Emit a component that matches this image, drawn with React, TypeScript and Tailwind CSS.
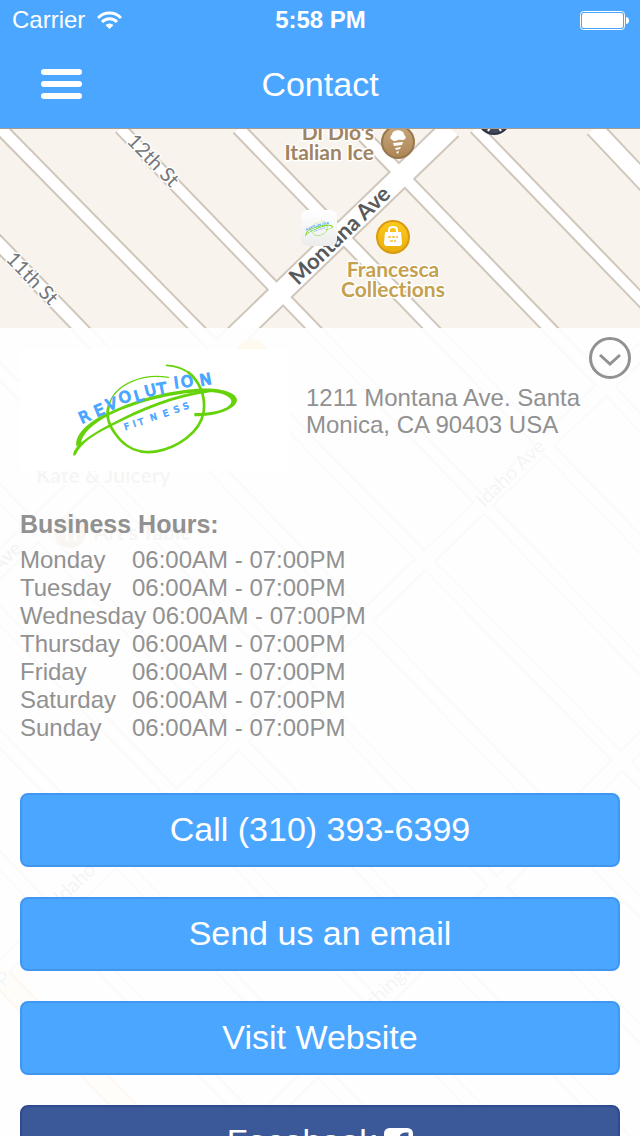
import { useState } from "react";
import clsx from "clsx";

type Action = {
  label: string;
  href: string;
  facebook?: boolean;
};

const HOURS = [
  { day: "Monday", time: "06:00AM - 07:00PM" },
  { day: "Tuesday", time: "06:00AM - 07:00PM" },
  { day: "Wednesday", time: "06:00AM - 07:00PM" },
  { day: "Thursday", time: "06:00AM - 07:00PM" },
  { day: "Friday", time: "06:00AM - 07:00PM" },
  { day: "Saturday", time: "06:00AM - 07:00PM" },
  { day: "Sunday", time: "06:00AM - 07:00PM" },
];

const ACTIONS: Action[] = [
  { label: "Call (310) 393-6399", href: "tel:+13103936399" },
  { label: "Send us an email", href: "mailto:" },
  { label: "Visit Website", href: "#website" },
  { label: "Facebook", href: "#facebook", facebook: true },
];

// numbered streets run down to the right, avenues down to the left
const STREETS = [
  { d: "M-590 128L410 1163", width: 15 },
  { d: "M-708 128L292 1163", width: 15 },
  { d: "M-471 128L529 1163", width: 15 },
  { d: "M-353 128L647 1163", width: 15 },
  { d: "M-235 128L765 1163", width: 15 },
  { d: "M-113 128L887 1163", width: 16 },
  { d: "M0 128L1000 1146", width: 15 },
  { d: "M120 128L1120 1163", width: 14 },
  { d: "M238 128L1238 1163", width: 15 },
  { d: "M356 128L1356 1163", width: 15 },
  { d: "M475 128L1475 1163", width: 14 },
  { d: "M594 128L1594 1188", width: 20 },
  { d: "M451 128L-49 611", width: 24 },
  { d: "M700 295L0 970", width: 17 },
  { d: "M720 662L220 1165", width: 17 },
];

function LogoMark({ className }: { className?: string }) {
  return (
    <svg viewBox="-120 -18 810 366" className={className} role="img" aria-label="Revolution Fitness">
      <g fill="none" stroke="#66d30a" strokeLinecap="round">
        <path d="M325 67C250 55 165 85 147 150" strokeWidth="4" />
        <path
          d="M147 150C135 185 150 215 165 235C195 280 240 298 290 289C350 278 420 235 431 170C438 120 415 75 385 52"
          strokeWidth="8"
        />
        <path d="M385 52C365 38 345 33 320 31" strokeWidth="5" />
      </g>
      <g fill="#66d30a">
        <path d="M50 274C40 240 90 195 145 173C240 125 370 96 460 101C500 104 532 118 531 136C528 160 480 184 403 184L403 174C470 175 515 158 514 138C512 122 480 112 445 111C370 109 240 135 145 182C100 205 60 240 64 270Z" />
        <path d="M40 302C38 280 70 250 145 210C250 154 340 118 450 104L450 112C340 128 250 165 148 217C100 241 62 266 47 300Z" />
      </g>
      <g fill="#4ba6ff" stroke="#4ba6ff" strokeWidth="4" className="font-['DejaVu_Sans',sans-serif]">
        <text
          x="65 110 145 182 228 259 294 344 366 422"
          y="206 186 167 147 142 126 119 100 98 92"
          rotate="-24 -22 -18 -18 -16 -14 -10 -8 -10 -10"
          fontSize="46"
        >
          REVOLUTION
        </text>
        <text x="196 222 238 274 312 344 372" y="226 216 212 198 186 175 165" rotate="-18" fontSize="27" strokeWidth="2">
          FITNESS
        </text>
      </g>
    </svg>
  );
}

function MapView() {
  return (
    <svg
      viewBox="0 129 640 1007"
      preserveAspectRatio="xMidYMin slice"
      className="absolute inset-0 h-full w-full bg-[#f8f4ed]"
      aria-label="Map"
    >
      <defs>
        <linearGradient id="brown" x1="0" y1="0" x2="0" y2="1">
          <stop offset="0" stopColor="#c9a67c" />
          <stop offset="1" stopColor="#ab8555" />
        </linearGradient>
        <linearGradient id="gold" x1="0" y1="0" x2="0" y2="1">
          <stop offset="0" stopColor="#fccb1f" />
          <stop offset="1" stopColor="#e9ae0c" />
        </linearGradient>
        <linearGradient id="tile" x1="0" y1="0" x2="0" y2="1">
          <stop offset="0" stopColor="#ffffff" />
          <stop offset="1" stopColor="#ececec" />
        </linearGradient>
      </defs>

      <g fill="none">
        {STREETS.map((s) => (
          <path key={s.d} d={s.d} stroke="#d0c6bb" strokeWidth={s.width} />
        ))}
        <path d="M-20 955L200 1186" stroke="#f59a1c" strokeWidth="22" />
        {STREETS.map((s) => (
          <path key={s.d} d={s.d} stroke="#ffffff" strokeWidth={s.width - 4} />
        ))}
        <path d="M-20 955L200 1186" stroke="#fff0a8" strokeWidth="18" />
      </g>

      <g
        className="font-['Lato',sans-serif]"
        fill="#76777a"
        stroke="#ffffff"
        strokeWidth="3"
        paintOrder="stroke"
        strokeLinejoin="round"
        fontSize="20"
      >
        <text transform="translate(126 142) rotate(46)">12th St</text>
        <text transform="translate(5 260) rotate(46)">11th St</text>
        <text transform="translate(484 508) rotate(-44)">Idaho Ave</text>
        <text transform="translate(62 905) rotate(-44)">Idaho Ave</text>
        <text transform="translate(352 1030) rotate(-44)">Washington Ave</text>
        <text transform="translate(4 988) rotate(-44)">P</text>
        <text transform="translate(-62 632) rotate(-44)" fontWeight="bold">
          Montana Ave
        </text>
        <text transform="translate(298 286) rotate(-44)" fill="#58595c" fontWeight="bold" fontSize="22">
          Montana Ave
        </text>
      </g>

      <g
        className="font-['Lato',sans-serif] font-bold [font-variant-ligatures:none]"
        stroke="#ffffff"
        strokeWidth="3"
        paintOrder="stroke"
        strokeLinejoin="round"
        fontSize="21"
      >
        <g fill="#9f8463">
          <text x="374" y="140" textAnchor="end">
            Di Dio's
          </text>
          <text x="374" y="160" textAnchor="end">
            Italian Ice
          </text>
          <text x="36" y="483">
            Kate &amp; Juicery
          </text>
          <text x="94" y="540">
            Art's Table
          </text>
        </g>
        <g fill="#c5a04e" textAnchor="middle">
          <text x="393" y="277">
            Francesca
          </text>
          <text x="393" y="297">
            Collections
          </text>
        </g>
      </g>

      <circle cx="494" cy="118" r="16" fill="#42475c" stroke="#2f3344" strokeWidth="2" />
      <path d="M488 131L491 126H498L501 131" fill="none" stroke="#ffffff" strokeWidth="2" />

      <circle cx="398" cy="142" r="16" fill="url(#brown)" stroke="#99774c" strokeWidth="2" />
      <path
        d="M391 139C389 137 392 135 392 134C393 129 403 129 404 134C404 135 407 137 405 139C403 141 400 139 398 140C395 142 393 141 391 139Z"
        fill="#ffffff"
      />
      <path d="M393 143L403 142L402 145L394 146ZM395 148L401 147L400 149L396 150ZM396 152L399 151L398 154Z" fill="#ffffff" />

      <circle cx="252" cy="355" r="16" fill="url(#gold)" />
      <circle cx="70" cy="532" r="16" fill="url(#brown)" />
      <path d="M65 524V532H70V524M67 532V541M75 541V524" fill="none" stroke="#ffffff" strokeWidth="2" />

      <circle cx="393" cy="237" r="16" fill="url(#gold)" stroke="#d99a12" strokeWidth="2" />
      <path d="M385 232H401L402 243Q402 246 399 246H387Q384 246 384 243Z" fill="#ffffff" />
      <path d="M389 233V230C389 226 397 226 397 230V233" fill="none" stroke="#ffffff" strokeWidth="2" />
      <path d="M388 237H398M390 241H396" stroke="#efbf3a" strokeWidth="1.500" strokeDasharray="3 1" />

      <rect x="301" y="210" width="36" height="36" rx="6" fill="url(#tile)" />
      <svg x="296" y="218" width="46" height="21">
        <LogoMark />
      </svg>
    </svg>
  );
}

function StatusBar() {
  return (
    <div className="grid h-10 grid-cols-3 items-center pr-[11px] pl-3">
      <div className="flex items-center gap-3">
        <span className="text-2xl">Carrier</span>
        <svg viewBox="0 0 25 18" className="h-[18px] w-[25px]" fill="none" stroke="currentColor" strokeWidth="3">
          <path d="M1 7A16 16 0 0 1 24 7" />
          <path d="M5 11A10.5 10.5 0 0 1 20 11" />
          <path d="M12.5 18L8.5 14A6 6 0 0 1 16.5 14Z" fill="currentColor" stroke="none" />
        </svg>
      </div>
      <span className="text-center text-2xl font-bold">5:58 PM</span>
      <svg viewBox="0 0 49 19" className="h-[19px] w-[49px] justify-self-end" fill="currentColor">
        <rect x="0.5" y="0.5" width="44" height="18" rx="3" fill="none" stroke="currentColor" />
        <rect x="2" y="2" width="41" height="15" rx="2" />
        <path d="M46 6C50 6 50 13 46 13Z" />
      </svg>
    </div>
  );
}

function FacebookIcon() {
  return (
    <svg viewBox="0 128 1536 1536" className="size-[29px]" fill="currentColor" aria-hidden="true">
      <path d="M1248 128q119 0 203.500 84.500t84.500 203.500v960q0 119-84.500 203.500t-203.500 84.500h-188v-595h199l30-232h-229v-148q0-56 23.500-84t91.500-28l122-1v-207q-63-9-178-9-136 0-217.500 80t-81.500 226v171h-200v232h200v595h-532q-119 0-203.500-84.500t-84.500-203.500v-960q0-119 84.500-203.500t203.500-84.500h960z" />
    </svg>
  );
}

export default function App() {
  const [isOpen, setIsOpen] = useState(true);

  return (
    <div className="flex h-screen flex-col font-['Liberation_Sans',Arial,sans-serif]">
      <header className="shrink-0 border-b border-[#a39c92] bg-[#4ba6ff] text-white">
        <StatusBar />
        <div className="grid h-[88px] grid-cols-[1fr_auto_1fr] items-center px-[41px]">
          <button aria-label="Menu" className="flex w-[41px] flex-col gap-1.5">
            <span className="h-1.5 w-full rounded-full bg-white" />
            <span className="h-1.5 w-full rounded-full bg-white" />
            <span className="h-1.5 w-full rounded-full bg-white" />
          </button>
          <h1 className="text-[34px]">Contact</h1>
        </div>
      </header>

      <main className="relative min-h-0 flex-1 overflow-hidden">
        <MapView />

        <div className="relative h-full overflow-y-auto pt-[199px] [scrollbar-width:none]">
          <section className="relative min-h-full bg-[#fefeff]/93 px-5 pt-[21px] pb-8 text-2xl text-[#919191]">
            <button
              onClick={() => setIsOpen((v) => !v)}
              aria-expanded={isOpen}
              aria-label={isOpen ? "Hide details" : "Show details"}
              className="absolute top-[9px] right-[9px]"
            >
              <svg
                viewBox="0 0 42 42"
                className={clsx("size-[42px]", !isOpen && "rotate-180")}
                fill="none"
                stroke="currentColor"
                strokeWidth="3"
              >
                <circle cx="21" cy="21" r="19.500" />
                <path d="M11 18L21 27L31 18" />
              </svg>
            </button>

            <div className="flex items-center gap-4">
              <LogoMark className="h-[122px] w-[270px] shrink-0 bg-white" />
              <address className="pt-0.5 leading-[27px] not-italic">1211 Montana Ave. Santa Monica, CA 90403 USA</address>
            </div>

            {isOpen && (
              <>
                <h2 className="mt-[39px] mb-2 text-[25px] leading-7 font-bold">Business Hours:</h2>
                <table className="block">
                  <tbody className="block">
                    {HOURS.map((h) => (
                      <tr key={h.day} className="flex leading-7">
                        <th scope="row" className="min-w-28 pr-1.5 text-left font-normal">
                          {h.day}
                        </th>
                        <td>{h.time}</td>
                      </tr>
                    ))}
                  </tbody>
                </table>

                <nav className="mt-[51px] flex flex-col gap-[30px]">
                  {ACTIONS.map((a) => (
                    <a
                      key={a.label}
                      href={a.href}
                      className={clsx(
                        "flex h-[74px] items-center justify-center gap-2 rounded-lg border-2 text-[34px] text-white",
                        a.facebook ? "border-[#2d4b8e] bg-[#3b5998]" : "border-[#3f97f2] bg-[#4ba6ff]",
                      )}
                    >
                      {a.label}
                      {a.facebook && <FacebookIcon />}
                    </a>
                  ))}
                </nav>
              </>
            )}
          </section>
        </div>
      </main>
    </div>
  );
}
